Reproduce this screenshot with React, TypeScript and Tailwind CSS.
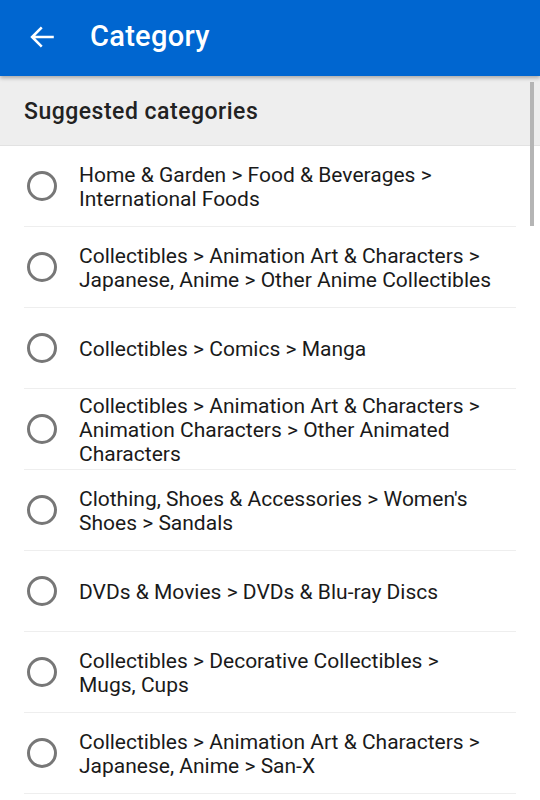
const items = [
  "Home & Garden > Food & Beverages > International Foods",
  "Collectibles > Animation Art & Characters > Japanese, Anime > Other Anime Collectibles",
  "Collectibles > Comics > Manga",
  "Collectibles > Animation Art & Characters > Animation Characters > Other Animated Characters",
  "Clothing, Shoes & Accessories > Women's Shoes > Sandals",
  "DVDs & Movies > DVDs & Blu-ray Discs",
  "Collectibles > Decorative Collectibles > Mugs, Cups",
  "Collectibles > Animation Art & Characters > Japanese, Anime > San-X",
];

export default function App() {
  return (
    <div className="relative w-[540px] h-[800px] overflow-hidden bg-white font-['Roboto',sans-serif]">
      <div className="relative z-10 h-[76px] bg-[#0066d0] flex items-center shadow-[0_2px_4px_rgba(0,0,0,0.3)]">
        <svg className="ml-[28px] -mt-[2px]" width="28" height="28" viewBox="0 0 24 24" fill="none" stroke="white" strokeWidth="2.2" strokeLinecap="square">
          <path d="M21 12H4M11 4.5 3.5 12l7.5 7.5" />
        </svg>
        <span className="ml-[34px] -mt-[2px] text-white text-[29px] font-medium tracking-[0.3px]">Category</span>
      </div>
      <div className="h-[70px] bg-[#eeeeee] flex items-center px-6 pt-[3px] border-b border-[#e2e2e2]">
        <span className="text-[23px] font-medium tracking-[0.5px] text-[#222222]">Suggested categories</span>
      </div>
      <div className="absolute right-[6px] top-[82px] w-[4px] h-[144px] bg-[#b5b5b5]" />
      <ul>
        {items.map((t) => (
          <li key={t} className="mx-6 h-[81px] flex items-center border-b border-[#eeeeee]">
            <span className="shrink-0 w-[30px] h-[30px] rounded-full border-[3px] border-[#777777] ml-[3px]" />
            <span className="ml-[22px] pr-6 pt-[2px] text-[21px] leading-[24px] text-[#1a1a1a]">{t}</span>
          </li>
        ))}
      </ul>
    </div>
  );
}
